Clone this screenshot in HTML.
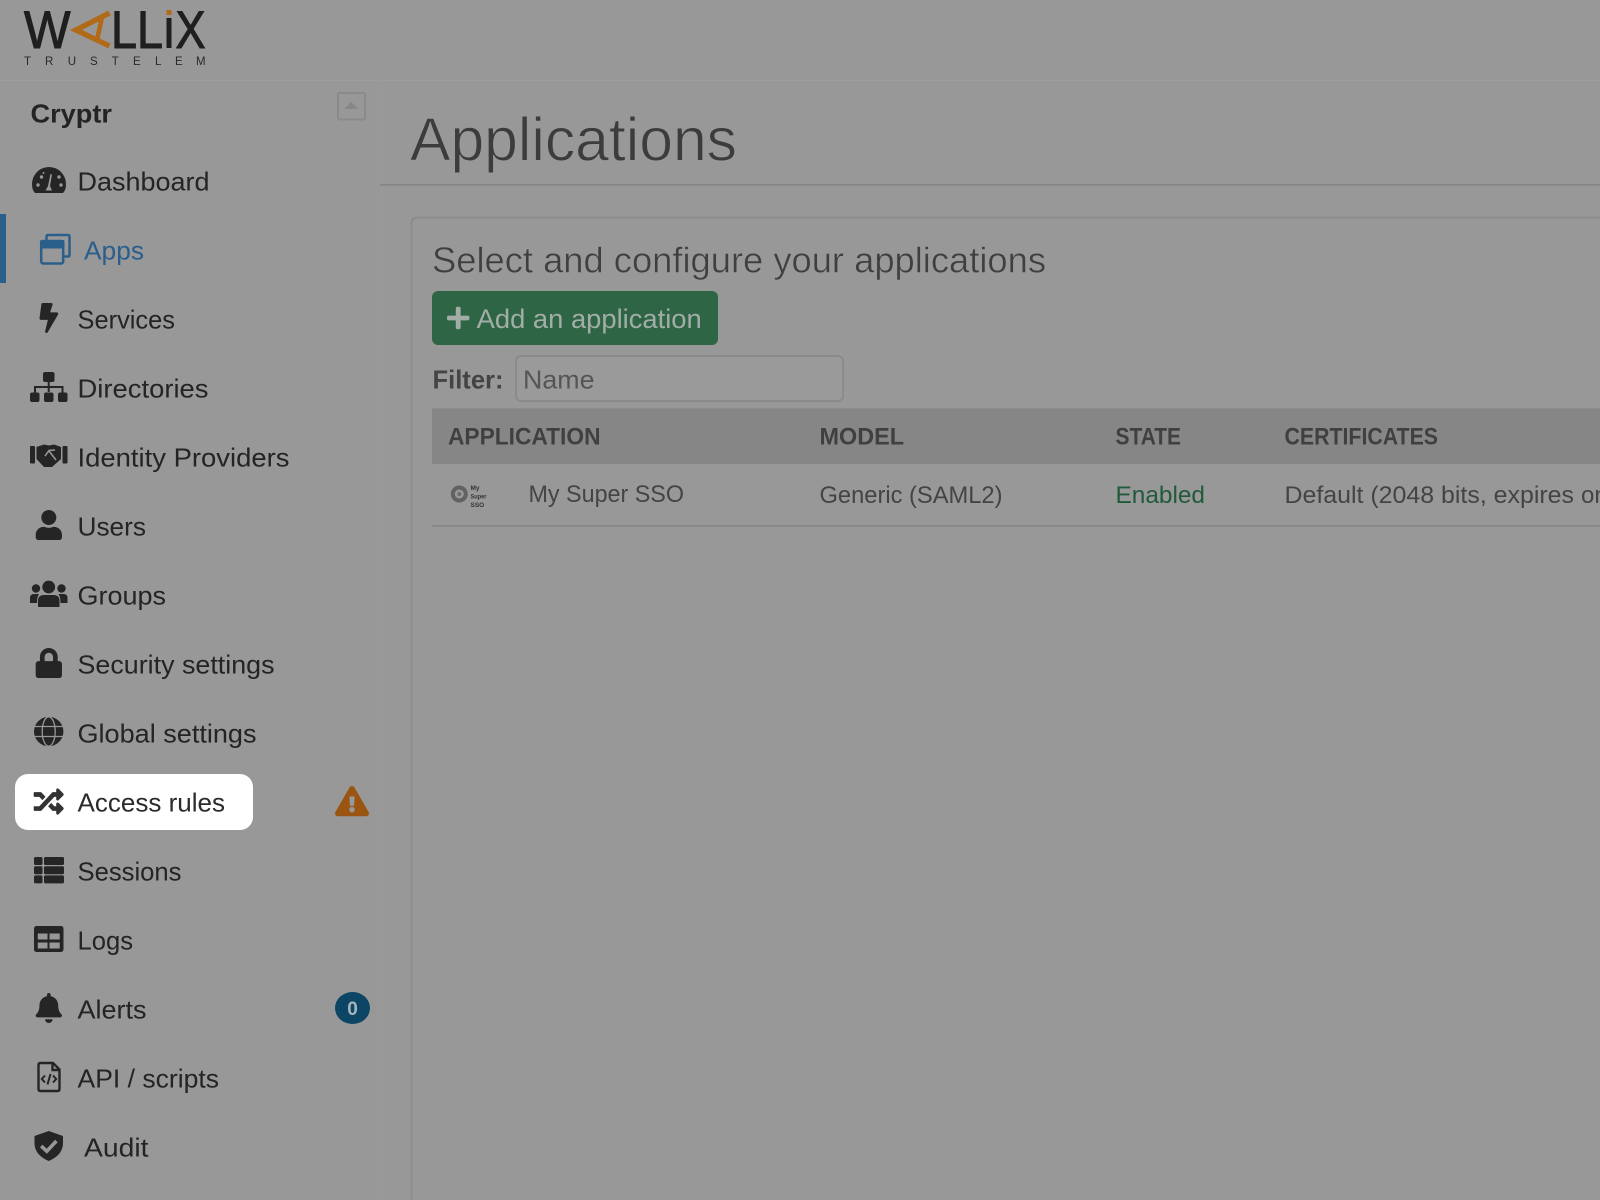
<!DOCTYPE html>
<html lang="en"><head><meta charset="utf-8"><title>Applications</title>
<style>
html,body{margin:0;padding:0;background:#989898;width:1600px;height:1200px;overflow:hidden}
svg{display:block}
text{font-family:"Liberation Sans",sans-serif}
.n{font-size:26px;fill:#242424}
.h{font-size:24px;font-weight:700;fill:#404040}
.r{font-size:24px;fill:#444}
.d{fill:#252525}
</style></head><body>
<svg xmlns="http://www.w3.org/2000/svg" width="1600" height="1200" viewBox="0 0 1600 1200">
<rect width="1600" height="1200" fill="#989898"/>
<rect x="0" y="80" width="1600" height="1" fill="#9d9d9d"/>
<rect x="380" y="81" width="1" height="1119" fill="#9a9a9a"/>

<!-- Logo -->
<text x="24" y="48" font-size="53" fill="#1f1f1f" stroke="#1f1f1f" stroke-width="1.1" textLength="46.5" lengthAdjust="spacingAndGlyphs">W</text>
<path d="M109.5 13L76 30L109.5 46" fill="none" stroke="#b06a18" stroke-width="5.4"/>
<path d="M102 17L97.5 38" fill="none" stroke="#b06a18" stroke-width="4.6"/>
<text y="48" font-size="53" fill="#1f1f1f" stroke="#1f1f1f" stroke-width="1.1" x="111" textLength="52" lengthAdjust="spacingAndGlyphs">LL</text>
<rect x="166.5" y="10" width="5" height="5" fill="#b06a18"/>
<rect x="166.5" y="18" width="5" height="30" fill="#1f1f1f"/>
<text x="175.5" y="48" font-size="53" fill="#1f1f1f" stroke="#1f1f1f" stroke-width="1.1" textLength="30" lengthAdjust="spacingAndGlyphs">X</text>
<text y="65" font-size="11.5" fill="#2a2a2a" x="24 45 67.7 90 111.7 133 155 175 196">TRUSTELEM</text>

<!-- Sidebar head -->
<text x="30.5" y="122.5" font-size="26" font-weight="700" fill="#242424" textLength="81.5" lengthAdjust="spacingAndGlyphs">Cryptr</text>
<rect x="338" y="93" width="27" height="26.5" rx="2" fill="none" stroke="#8a8a8a" stroke-width="2"/>
<path d="M344.3 109L351.2 101.7L358 109Z" fill="#878787"/>

<!-- Active bar -->
<rect x="0" y="214" width="6" height="69" fill="#2a5f8b"/>

<!-- Access rules pill -->
<rect x="15" y="774" width="238" height="56" rx="13" fill="#fff"/>

<!-- Nav text -->
<text class="n" x="77.5" y="190.7" textLength="132" lengthAdjust="spacingAndGlyphs">Dashboard</text>
<text class="n" x="84" y="259.5" textLength="60" lengthAdjust="spacingAndGlyphs" style="fill:#2a5f8b">Apps</text>
<text class="n" x="77.5" y="328.4" textLength="97.5" lengthAdjust="spacingAndGlyphs">Services</text>
<text class="n" x="77.5" y="397.4" textLength="131" lengthAdjust="spacingAndGlyphs">Directories</text>
<text class="n" x="77.5" y="466.4" textLength="212" lengthAdjust="spacingAndGlyphs">Identity Providers</text>
<text class="n" x="77.5" y="535.4" textLength="68.5" lengthAdjust="spacingAndGlyphs">Users</text>
<text class="n" x="77.5" y="604.4" textLength="88.5" lengthAdjust="spacingAndGlyphs">Groups</text>
<text class="n" x="77.5" y="673.6" textLength="197" lengthAdjust="spacingAndGlyphs">Security settings</text>
<text class="n" x="77.5" y="742.6" textLength="179" lengthAdjust="spacingAndGlyphs">Global settings</text>
<text class="n" x="77.5" y="811.7" textLength="147.5" lengthAdjust="spacingAndGlyphs" style="fill:#2b2b2b">Access rules</text>
<text class="n" x="77.5" y="880.5" textLength="104" lengthAdjust="spacingAndGlyphs">Sessions</text>
<text class="n" x="77.5" y="949.5" textLength="55.5" lengthAdjust="spacingAndGlyphs">Logs</text>
<text class="n" x="77.5" y="1018.5" textLength="69" lengthAdjust="spacingAndGlyphs">Alerts</text>
<text class="n" x="77.5" y="1087.5" textLength="141.5" lengthAdjust="spacingAndGlyphs">API / scripts</text>
<text class="n" x="84" y="1156.5" textLength="64.5" lengthAdjust="spacingAndGlyphs">Audit</text>

<!-- Dashboard icon -->
<path class="d" d="M35 193Q32 190 32 184A17 17 0 0 1 66 184Q66 190 63 193Z"/>
<g fill="#989898"><circle cx="38" cy="185" r="1.7"/><circle cx="41.5" cy="177" r="1.7"/><circle cx="43.5" cy="173" r="1"/><circle cx="59" cy="177" r="1.7"/><circle cx="61" cy="185" r="1.7"/><path d="M50.5 174L52 174.5L50 186L52 190.5H45.5L48 186Z"/></g>

<!-- Apps icon -->
<g fill="none" stroke="#2a5f8b" stroke-width="2.5"><path d="M46.5 240V236.5Q46.5 235 48 235H68Q69.5 235 69.5 236.5V255Q69.5 256.5 68 256.5H64.5"/><rect x="41.2" y="241" width="22" height="22.5" rx="2"/></g>
<rect x="40" y="240" width="24.5" height="8.5" rx="1.5" fill="#2a5f8b"/>

<!-- Bolt -->
<path class="d" transform="translate(39.5 303) scale(.0586)" d="M296 160H180.6l42.6-129.8C227.2 15 215.7 0 200 0H56C44 0 33.8 8.9 32.2 20.8l-32 240C-1.7 275.2 9.5 288 24 288h118.7L96.6 482.5c-3.6 15.2 8 29.5 23.3 29.5 8.4 0 16.4-4.4 20.8-12l176-304c9.3-15.9-2.2-36-20.7-36z"/>

<!-- Sitemap -->
<g class="d"><rect x="43" y="372" width="11.5" height="10" rx="2"/><rect x="30" y="392.5" width="9.5" height="9.5" rx="2"/><rect x="44" y="392.5" width="9.5" height="9.5" rx="2"/><rect x="58" y="392.5" width="9.5" height="9.5" rx="2"/></g>
<path d="M48.7 382V392M35 392.5V387H62.5V392.5" fill="none" stroke="#252525" stroke-width="2"/>

<!-- Handshake -->
<g class="d"><rect x="30" y="446" width="5" height="17.5" rx="1"/><rect x="62.5" y="446" width="5" height="17.5" rx="1"/><path d="M36.5 447L44 444.5L49 445.5L54 444.5L61 447V459L52 467H44L36.5 459Z"/></g>
<path d="M45 456L49 450.5L55 450M49 451L56 460" fill="none" stroke="#989898" stroke-width="1.5"/>

<!-- User -->
<path class="d" transform="translate(35.7 510) scale(.0586)" d="M224 256c70.7 0 128-57.3 128-128S294.7 0 224 0 96 57.3 96 128s57.3 128 128 128zm89.6 32h-16.7c-22.2 10.2-46.9 16-72.9 16s-50.6-5.8-72.9-16h-16.7C60.2 288 0 348.2 0 422.4V464c0 26.5 21.5 48 48 48h352c26.5 0 48-21.5 48-48v-41.6c0-74.2-60.2-134.4-134.4-134.4z"/>

<!-- Groups -->
<g class="d"><circle cx="48.7" cy="587" r="6.4"/><circle cx="36" cy="588.5" r="4.2"/><circle cx="61.5" cy="588.5" r="4.2"/><path d="M30 603V598Q30 594 34 594H39Q37 597 37 603Z"/><path d="M67.5 603V598Q67.5 594 63.5 594H58.5Q60.5 597 60.5 603Z"/><path d="M38 607V601Q38 595 44 595H53.5Q59.5 595 59.5 601V607Z"/></g>

<!-- Lock -->
<path class="d" transform="translate(35.7 648) scale(.0586)" d="M400 224h-24v-72C376 68.2 307.8 0 224 0S72 68.2 72 152v72H48c-26.5 0-48 21.5-48 48v192c0 26.5 21.5 48 48 48h352c26.5 0 48-21.5 48-48V272c0-26.5-21.5-48-48-48zm-104 0H152v-72c0-39.7 32.3-72 72-72s72 32.3 72 72v72z"/>

<!-- Globe -->
<circle class="d" cx="48.7" cy="731.5" r="14.7"/>
<g fill="none" stroke="#989898" stroke-width="1.3"><ellipse cx="48.7" cy="731.5" rx="6.5" ry="14.7"/><path d="M34 726.5H63.4M34 736.5H63.4"/></g>

<!-- Random -->
<path fill="#333" transform="translate(33.7 786.5) scale(.0586)" d="M504.971 359.029c9.373 9.373 9.373 24.569 0 33.941l-80 79.984c-15.01 15.01-40.971 4.49-40.971-16.971V416h-58.785a12.004 12.004 0 0 1-8.773-3.812l-70.556-75.596 53.333-57.143L352 336h32v-39.981c0-21.438 25.943-31.998 40.971-16.971l80 79.981zM12 176h84l52.781 56.551 53.333-57.143-70.556-75.596A11.999 11.999 0 0 0 122.785 96H12c-6.627 0-12 5.373-12 12v56c0 6.627 5.373 12 12 12zm372 0v39.984c0 21.46 25.961 31.98 40.971 16.971l80-79.984c9.373-9.373 9.373-24.569 0-33.941l-80-79.981C409.943 24.021 384 34.582 384 56.019V96h-58.785a12.004 12.004 0 0 0-8.773 3.812L96 336H12c-6.627 0-12 5.373-12 12v56c0 6.627 5.373 12 12 12h110.785c3.326 0 6.503-1.381 8.773-3.812L352 176h32z"/>

<!-- Warning -->
<path fill="#9a5512" transform="translate(335 786) scale(.059)" fill-rule="evenodd" d="M569.517 440.013C587.975 472.007 564.806 512 527.94 512H48.054c-36.937 0-59.999-40.055-41.577-71.987L246.423 23.985c18.467-32.009 64.72-31.951 83.154 0l239.94 416.028zM288 354c-25.405 0-46 20.595-46 46s20.595 46 46 46 46-20.595 46-46-20.595-46-46-46zm-43.673-165.346l7.418 136c.347 6.364 5.609 11.346 11.982 11.346h48.546c6.373 0 11.635-4.982 11.982-11.346l7.418-136c.375-6.874-5.098-12.654-11.982-12.654h-63.383c-6.884 0-12.356 5.78-11.981 12.654z"/>

<!-- Sessions -->
<g class="d"><rect x="34" y="857" width="8.5" height="8" rx="1.5"/><rect x="44" y="857" width="20" height="8" rx="1.5"/><rect x="34" y="866.2" width="8.5" height="8" rx="1.5"/><rect x="44" y="866.2" width="20" height="8" rx="1.5"/><rect x="34" y="875.4" width="8.5" height="8" rx="1.5"/><rect x="44" y="875.4" width="20" height="8" rx="1.5"/></g>

<!-- Logs -->
<rect class="d" x="34" y="926" width="29.5" height="26" rx="2.5"/>
<g fill="#989898"><rect x="37.8" y="933.5" width="9.7" height="6"/><rect x="49.5" y="933.5" width="10.2" height="6"/><rect x="37.8" y="942.5" width="9.7" height="6"/><rect x="49.5" y="942.5" width="10.2" height="6"/></g>

<!-- Bell -->
<path class="d" transform="translate(35.7 993) scale(.0586)" d="M224 512c35.32 0 63.97-28.65 63.97-64H160.03c0 35.35 28.65 64 63.97 64zm215.39-149.71c-19.32-20.76-55.47-51.99-55.47-154.29 0-77.7-54.48-139.9-127.94-155.16V32c0-17.67-14.32-32-31.98-32s-31.98 14.33-31.98 32v20.84C118.56 68.1 64.08 130.3 64.08 208c0 102.3-36.15 133.53-55.47 154.29-6 6.45-8.66 14.16-8.61 21.71.11 16.4 12.98 32 32.1 32h383.8c19.12 0 32-15.6 32.1-32 .05-7.55-2.61-15.27-8.61-21.71z"/>

<!-- Badge -->
<ellipse cx="352.5" cy="1008" rx="17.5" ry="16" fill="#0d4665"/>
<text x="352.5" y="1015" font-size="19" font-weight="700" fill="#a9b5bc" text-anchor="middle">0</text>

<!-- File code -->
<path d="M40.5 1063H53L59.5 1069.5V1089Q59.5 1091 57.5 1091H40.5Q38.5 1091 38.5 1089V1065Q38.5 1063 40.5 1063Z" fill="none" stroke="#252525" stroke-width="2.4"/>
<path d="M52.5 1063V1070H59.5" fill="none" stroke="#252525" stroke-width="2.4"/>
<path d="M45 1075.5L41.8 1079L45 1082.5M53 1075.5L56.2 1079L53 1082.5M50.5 1074L47.5 1084.5" fill="none" stroke="#252525" stroke-width="2"/>

<!-- Shield -->
<path class="d" d="M48.7 1131L63 1136V1143Q63 1155 48.7 1161Q34.5 1155 34.5 1143V1136Z"/>
<path d="M41.2 1146L46.8 1151.2L56.4 1141" fill="none" stroke="#989898" stroke-width="3.6"/>

<!-- Main -->
<text x="410" y="160.7" font-size="61" fill="#3c3c3c" stroke="#989898" stroke-width=".9" textLength="327" lengthAdjust="spacingAndGlyphs">Applications</text>
<rect x="380" y="184" width="1220" height="1.6" fill="#858585"/>

<path d="M1601 217.5H418Q411.5 217.5 411.5 223.5V1201" fill="none" stroke="#8c8c8c" stroke-width="2"/>

<text x="432" y="272.7" font-size="36" fill="#3f3f3f" stroke="#989898" stroke-width=".5" textLength="614" lengthAdjust="spacingAndGlyphs">Select and configure your applications</text>

<rect x="432" y="291" width="286" height="54" rx="6" fill="#2e6645"/>
<path fill="#a3ada7" transform="translate(447 305.2) scale(.05)" d="M416 208H272V64c0-17.67-14.33-32-32-32h-32c-17.67 0-32 14.33-32 32v144H32c-17.67 0-32 14.33-32 32v32c0 17.67 14.33 32 32 32h144v144c0 17.67 14.33 32 32 32h32c17.67 0 32-14.33 32-32V304h144c17.67 0 32-14.33 32-32v-32c0-17.67-14.33-32-32-32z"/>
<text x="476.7" y="328" font-size="27" fill="#a3ada7" textLength="225" lengthAdjust="spacingAndGlyphs">Add an application</text>

<text x="432.5" y="388.7" font-size="26" font-weight="700" fill="#444" textLength="71" lengthAdjust="spacingAndGlyphs">Filter:</text>
<rect x="516" y="356" width="327" height="45" rx="5" fill="#9a9a9a" stroke="#8b8b8b" stroke-width="2"/>
<text x="523" y="388.7" font-size="26" fill="#555" textLength="71.5" lengthAdjust="spacingAndGlyphs">Name</text>

<rect x="432" y="408.3" width="1168" height="55.7" fill="#868686"/>
<text class="h" x="448" y="444.7" textLength="152.5" lengthAdjust="spacingAndGlyphs">APPLICATION</text>
<text class="h" x="819.5" y="444.7" textLength="84.5" lengthAdjust="spacingAndGlyphs">MODEL</text>
<text class="h" x="1115.5" y="444.7" textLength="65.5" lengthAdjust="spacingAndGlyphs">STATE</text>
<text class="h" x="1284.5" y="444.7" textLength="153.5" lengthAdjust="spacingAndGlyphs">CERTIFICATES</text>

<circle cx="459.3" cy="494" r="6.5" fill="none" stroke="#626262" stroke-width="4"/>
<circle cx="459.3" cy="494" r="2" fill="#6a6a6a"/>
<g font-size="6.5" font-weight="700" fill="#333"><text x="470.5" y="490">My</text><text x="470.5" y="498.5" textLength="16" lengthAdjust="spacingAndGlyphs">Super</text><text x="470.5" y="507">SSO</text></g>

<text class="r" x="528.5" y="501.8" textLength="155.5" lengthAdjust="spacingAndGlyphs">My Super SSO</text>
<text class="r" x="819.5" y="503.2" textLength="183" lengthAdjust="spacingAndGlyphs">Generic (SAML2)</text>
<text class="r" x="1115.5" y="503.2" textLength="89.5" lengthAdjust="spacingAndGlyphs" style="fill:#215a3a">Enabled</text>
<text class="r" x="1284.5" y="503.2" textLength="289.5" lengthAdjust="spacingAndGlyphs">Default (2048 bits, expires</text>
<text class="r" x="1581" y="503.2">on</text>
<rect x="432" y="525" width="1168" height="1.6" fill="#868686"/>
</svg>
</body></html>
